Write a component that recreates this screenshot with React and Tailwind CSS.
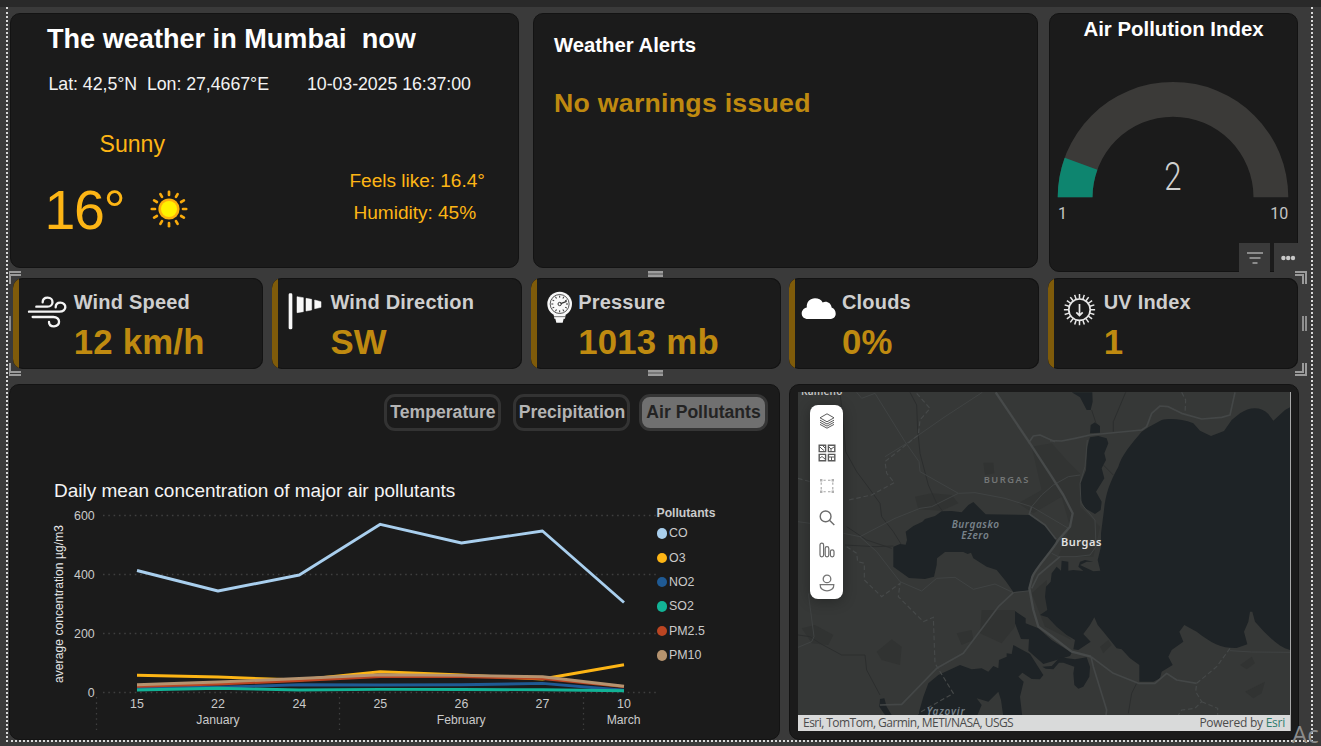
import React from "react";

const CARD = "bg-[#1b1b1b] border border-[#131313] rounded-[10px]";

function SunIcon() {
  const rays = Array.from({ length: 12 }, (_, i) => i * 30);
  return (
    <svg width="40" height="40" viewBox="-20 -20 40 40">
      {rays.map((a) => (
        <line key={a} x1="0" y1="-14" x2="0" y2="-17.2" stroke="#f9ab0c" strokeWidth="2.7" strokeLinecap="round" transform={`rotate(${a})`} />
      ))}
      <circle r="10.6" fill="#fdb10b" />
      <circle r="8" fill="#fff200" />
    </svg>
  );
}

function CurrentWeather() {
  return (
    <section className={`${CARD} relative h-[255px] w-[509px] pl-[36px] pt-[11px]`}>
      <h1 className="whitespace-pre text-[27.1px] font-bold leading-none text-white">{"The weather in Mumbai  now"}</h1>
      <div className="mt-[24px] flex whitespace-pre pl-[1.5px] text-[17.8px] leading-none text-[#f2f2f2]">
        <span className="w-[258.5px] tracking-[-0.05px]">{"Lat: 42,5°N  Lon: 27,4667°E"}</span>
        <span className="tracking-[-0.07px]">10-03-2025 16:37:00</span>
      </div>
      <div className="flex text-[#fdb515]">
        <div className="w-[302.5px] pt-[39px]">
          <div className="pl-[52.5px] text-[23.1px] leading-none">Sunny</div>
          <div className="-ml-[2.5px] mt-[27px] flex items-start">
            <span className="w-[104px] text-[55.5px] leading-none tracking-[-1.4px]">16°</span>
            <span className="pt-[6px]"><SunIcon /></span>
          </div>
        </div>
        <div className="whitespace-nowrap pt-[77px] text-[19.1px] leading-none tracking-[-0.04px]">
          <div>Feels like: 16.4°</div>
          <div className="mt-[13px] pl-[4px]">Humidity: 45%</div>
        </div>
      </div>
    </section>
  );
}

function Alerts() {
  return (
    <section className={`${CARD} h-[255px] w-[505px] pl-[20px] pt-[21px]`}>
      <h2 className="text-[20.3px] font-bold leading-none text-white">Weather Alerts</h2>
      <p className="mt-[35px] text-[26.7px] font-bold leading-none tracking-[0.26px] text-[#bf8a10]">No warnings issued</p>
    </section>
  );
}

function PollutionIndex() {
  return (
    <section className={`${CARD} relative h-[259px] w-[249px] pt-[5px]`}>
      <h2 className="text-center text-[20.4px] font-bold leading-none text-white">Air Pollution Index</h2>
      <svg className="mt-[42px] block" width="247" height="150" viewBox="1050 81 247 150">
        <path d="M1057.7 197.2 A115.3 115.3 0 0 1 1288.3 197.2 L1253.5 197.2 A80.5 80.5 0 0 0 1092.5 197.2 Z" fill="#3b3a38" />
        <path d="M1057.7 197.2 A115.3 115.3 0 0 1 1064.7 157.8 L1097.4 169.7 A80.5 80.5 0 0 0 1092.5 197.2 Z" fill="#0e856f" />
        <text x="0" y="0" transform="translate(1173 190) scale(0.82 1)" textAnchor="middle" fontFamily="Roboto, sans-serif" fontWeight="300" fontSize="38" fill="#d0d0d0">2</text>
        <text x="1058" y="218.5" fontFamily="Roboto, sans-serif" fontSize="16" fill="#c4c4c4">1</text>
        <text x="1288.2" y="218.5" textAnchor="end" fontFamily="Roboto, sans-serif" fontSize="16" fill="#c4c4c4">10</text>
      </svg>
      <div className="absolute -bottom-px -right-[5px] flex gap-[4px]">
        <div className="flex h-[29px] w-[31px] items-center justify-center bg-[#3a3a3a]">
          <svg width="16" height="14" viewBox="0 0 16 14" stroke="#a6a6a6" strokeWidth="1.7">
            <path d="M0 2H16M2.5 7H13.5M5.5 12H10.5" />
          </svg>
        </div>
        <div className="flex h-[29px] w-[28px] items-center justify-center bg-[#3a3a3a]">
          <svg width="16" height="6" viewBox="0 0 16 6" fill="#c8c8c8">
            <circle cx="3.4" cy="3" r="2.2" /><circle cx="8.2" cy="3" r="2.2" /><circle cx="13" cy="3" r="2.2" />
          </svg>
        </div>
      </div>
    </section>
  );
}

const ticks = (n) => Array.from({ length: n }, (_, i) => (i * 360) / n);

const windIcon = (
  <svg width="54" height="91" viewBox="57 48 162 273" fill="none" stroke="#f4f4f4" strokeWidth="7" strokeLinecap="round">
    <path d="M109 134H142C163 134 162 107 143 107C133 107 128 113 128 121" />
    <path d="M87 149H178C202 149 201 122 181 122C171 122 167 129 167 136" />
    <path d="M98 165H160C183 165 182 193 162 193C152 193 147 187 147 180" />
  </svg>
);
const sockIcon = (
  <svg width="52" height="91" viewBox="834 48 156 273" fill="#f8f8f8">
    <rect x="866" y="94" width="11" height="108" rx="4" />
    <path d="M891 104L910 107V149L891 152ZM918 109L935 112V144L918 147ZM944 114L963 119V136L944 140Z" stroke="#f8f8f8" strokeWidth="1.5" />
  </svg>
);
const pressureIcon = (
  <svg width="41" height="91" viewBox="411 48 123 273">
    <circle cx="479" cy="126" r="37" fill="#f8f8f8" />
    <circle cx="479" cy="126" r="28.5" fill="none" stroke="#333" strokeWidth="2.5" />
    {ticks(12).map((a) => (
      <path key={a} d="M479 101V107" stroke="#333" strokeWidth="3" transform={`rotate(${a} 479 126)`} />
    ))}
    <circle cx="479" cy="126" r="5" fill="none" stroke="#333" strokeWidth="3" />
    <path d="M482 125L500 118" stroke="#333" strokeWidth="3.5" />
    <path d="M461 158H497L495 170H491L488 182H469L466 170H463Z" fill="#f8f8f8" />
    <path d="M461 164H497" stroke="#333" strokeWidth="2" />
  </svg>
);
const cloudIcon = (
  <svg width="46" height="91" viewBox="795.5 278 46 91">
    <path fill="#fff" d="M808.5 319C804.5 319 802.2 316.5 802.2 313.5C802.2 310.5 804.5 308 807.3 307.5C806.8 302 810.5 298.3 815.5 298.3C819 298.3 821.7 299.8 823.2 302.4C827 300.6 831.8 303 832.1 307.6C835 308.7 836.2 311 836.2 313.7C836.2 317 833.5 319 830 319Z" />
  </svg>
);
const uvIcon = (
  <svg width="49" height="91" viewBox="1054.5 278 49 91" fill="none" stroke="#e8e8e8">
    <circle cx="1080" cy="309.7" r="10.7" strokeWidth="1.7" />
    {ticks(20).map((a) => (
      <path key={a} d="M1080 298.7V294.1" strokeWidth="1.5" transform={`rotate(${a} 1080 309.7)`} />
    ))}
    <path d="M1080 304V315M1076.8 312.3L1080 315.5L1083.2 312.3" strokeWidth="1.7" />
  </svg>
);

const METRICS = [
  { label: "Wind Speed", value: "12 km/h", icon: windIcon },
  { label: "Wind Direction", value: "SW", icon: sockIcon },
  { label: "Pressure", value: "1013 mb", icon: pressureIcon },
  { label: "Clouds", value: "0%", icon: cloudIcon },
  { label: "UV Index", value: "1", icon: uvIcon },
];

function Metric({ label, value, icon }) {
  return (
    <div className="flex h-[91px] w-[250px] overflow-hidden rounded-[10px] bg-[#1b1b1b] shadow-[inset_0_0_0_1px_#131313]">
      <div className="w-[6px] shrink-0 bg-[#7f5b0a]" />
      {icon}
      <div className="whitespace-nowrap pl-[0.7px] pt-[14px] font-bold leading-none">
        <div className="text-[20px] leading-none tracking-[0.2px] text-[#cfcfcf]">{label}</div>
        <div className="mt-[13px] text-[34.8px] leading-none tracking-[0.2px] text-[#bf8a10]">{value}</div>
      </div>
    </div>
  );
}

function SelectionFrame() {
  const c = "absolute h-[13px] w-[12px] border-[#9a9a9a]";
  const h = "absolute left-[639px] h-[6px] w-[15px] border-y-2 border-[#9c9c9c] bg-[#777]";
  return (
    <div className="pointer-events-none absolute -left-[4px] -top-[7px] h-[105px] w-[1298px]">
      <div className={`${c} left-0 top-0 border-l-2 border-t-[5px] border-double`} />
      <div className={`${c} right-0 top-0 border-r-[5px] border-t-[5px] border-double`} />
      <div className={`${c} bottom-0 left-0 border-b-[5px] border-l-2 border-double`} />
      <div className={`${c} bottom-0 right-0 border-b-[5px] border-r-[5px] border-double`} />
      <div className={`${h} top-0`} />
      <div className={`${h} bottom-0`} />
      <div className="absolute left-0 top-[45px] h-[15px] w-[2px] bg-[#8a8a8a]" />
      <div className="absolute right-0 top-[45px] h-[15px] w-[5px] border-x-2 border-[#8f8f8f]" />
    </div>
  );
}

const XS = [137, 218, 299.3, 380.3, 461.5, 542.5, 624];
const SERIES = [
  { name: "CO", color: "#a9cfee", ys: [570.5, 591, 575, 524.3, 543, 531, 602.5] },
  { name: "O3", color: "#fdb515", ys: [675.3, 677, 680, 671.8, 675, 679, 664.8] },
  { name: "NO2", color: "#1f5a94", ys: [688, 687.2, 684.8, 685, 684.8, 683.4, 690.3] },
  { name: "SO2", color: "#12b396", ys: [690, 688.3, 690, 689.4, 689.5, 689.8, 690.8] },
  { name: "PM2.5", color: "#bb4522", ys: [686.3, 684, 680.6, 676.6, 676.6, 678.6, 686.6] },
  { name: "PM10", color: "#b5936f", ys: [684.8, 682, 678.5, 674.8, 675.4, 676.8, 686.3] },
];

function Chart() {
  const labels = ["15", "22", "24", "25", "26", "27", "10"];
  return (
    <svg width="606" height="230" viewBox="50 503 606 230" fontSize="12.4" fill="#cacaca" className="shrink-0">
      <g stroke="#3f3f3f" strokeWidth="1.3" strokeDasharray="1.6 3.7">
        {[515.5, 574.5, 633.5, 692.5].map((y) => <line key={y} x1="103" x2="656" y1={y} y2={y} />)}
        {[96.5, 339.5, 583.5].map((x) => <line key={x} y1="697" y2="730" x1={x} x2={x} />)}
      </g>
      {[["600", 519.5], ["400", 578.5], ["200", 637.5], ["0", 696.7]].map(([t, y]) => (
        <text key={t} x="94.7" y={y} textAnchor="end">{t}</text>
      ))}
      <text transform="translate(62.8 604) rotate(-90)" textAnchor="middle" fontSize="12" textLength="158" fill="#e6e6e6">average concentration µg/m3</text>
      {labels.map((t, i) => <text key={t} x={XS[i]} y="708.4" textAnchor="middle">{t}</text>)}
      <text x="218" y="724.4" textAnchor="middle" fontSize="12.2">January</text>
      <text x="461.2" y="724.4" textAnchor="middle" fontSize="12.2">February</text>
      <text x="623.6" y="724.4" textAnchor="middle" fontSize="12.2">March</text>
      {SERIES.map((s) => (
        <polyline key={s.name} fill="none" stroke={s.color} strokeWidth="2.9" strokeLinejoin="round" points={XS.map((x, i) => `${x},${s.ys[i]}`).join(" ")} />
      ))}
    </svg>
  );
}

function Tab({ children, active, wide }) {
  return (
    <button
      className={`flex h-[37px] items-center justify-center whitespace-nowrap rounded-[11px] border-[3px] text-[17.6px] font-bold leading-none ${
        wide ? "w-[129px]" : "w-[117px] pl-px"
      } ${active ? "border-[#353535] bg-[#707070] text-[#232323]" : "border-[#333333] bg-[#1b1b1b] text-[#b4b4b4]"}`}
    >
      {children}
    </button>
  );
}

function PollutantsPanel() {
  return (
    <section className={`${CARD} h-[356px] w-[771px] pt-[9px]`}>
      <div className="flex justify-end pr-[11px]">
        <div className="mr-[12px]"><Tab>Temperature</Tab></div>
        <div className="mr-[9px]"><Tab>Precipitation</Tab></div>
        <Tab active wide>Air Pollutants</Tab>
      </div>
      <h2 className="mt-[50px] pl-[44px] text-[19px] leading-none text-[#f4f4f4]">Daily mean concentration of major air pollutants</h2>
      <div className="mt-[3px] flex pl-[40px]">
        <Chart />
        <div className="pl-[0.5px] pt-[4px] text-[12.4px] leading-none text-[#cacaca]">
          <div className="mb-[2px] text-[12.2px] font-bold">Pollutants</div>
          {SERIES.map((s) => (
            <div key={s.name} className="flex h-[24.4px] items-center gap-[2px]">
              <span className="h-[10.5px] w-[10.5px] rounded-full" style={{ backgroundColor: s.color }} />
              {s.name}
            </div>
          ))}
        </div>
      </div>
    </section>
  );
}

function MapDrawing() {
  return (
    <svg className="block" width="492" height="339" viewBox="39 36 1476 1017">
      <rect x="39" y="36" width="1476" height="1017" fill="#363837" />
      <g fill="#313332">
        <path d="M595 248L625 248L628 280L600 285ZM390 350L440 340L500 345L520 370L470 392L400 388ZM590 690L640 690L690 690L690 740L650 790L585 760ZM275 815L320 778L350 800L345 855L290 840ZM50 745L90 735L145 765L130 795L80 790ZM515 760L560 750L565 780L530 795Z" />
        <path d="M740 200L800 190L845 240L885 280L885 380L945 440L925 530L820 530L855 440L830 350L745 400L700 370L770 330Z" fill="#323433" />
        <path d="M1365 855L1400 830L1410 850L1385 868ZM1380 935L1440 905L1430 940L1405 955ZM945 800L970 780L980 795L955 820ZM740 640L785 600L790 700L860 780L780 740Z" />
      </g>
      <g fill="#1e2326">
        <path d="M325 500L345 492L362 494L366 480L362 455L385 438L412 425L420 417L450 408L470 394L500 393L530 397L550 375L565 366L602 403L735 405C770 425 800 450 813 478L812 490C795 520 760 560 742 585L730 632L685 636L662 603L635 570L605 560L565 535L558 518L548 522L535 516L480 516L456 535L455 555L447 590L420 597L372 594L325 560Z" />
        <path d="M1515 82L1500 90L1465 122L1450 102C1430 80 1395 78 1365 100L1340 120L1317 153L1278 168L1245 152L1225 130C1190 115 1150 115 1130 120L1090 142L1070 155C1040 190 1010 225 1000 260C975 305 962 340 957 390L948 460L948 500L938 540L946 572L925 574L885 555L905 545L925 545L900 540L885 545L880 560L895 573L865 570L850 572L850 545L830 542L828 572L815 560L800 580L797 605L783 620L780 650L787 690L765 705L788 712L815 740L845 765L870 780L865 808L880 810L917 785L895 762L915 735L928 712L938 735L955 755L995 805L1010 808L1035 835L1063 855L1063 905L1105 905L1125 895L1130 875L1163 855L1150 830L1160 810L1195 785L1183 755L1198 735L1235 755C1280 790 1310 805 1355 804L1387 793L1377 755L1390 725L1395 695L1402 695L1410 725C1450 770 1480 800 1515 810Z" />
        <path d="M915 172L940 168L965 175L970 190L958 220L963 240L950 265L958 295L933 335L950 365L947 390L930 402L900 385L885 355L887 310L903 270L907 200ZM917 135L930 127L945 138L945 158L915 160ZM860 37L885 52L905 90L917 90L923 65L922 37Z" />
        <path d="M690 693L722 715L722 730L760 745L800 780L860 818L855 828L775 852L730 812L732 778L708 777L690 730Z" />
        <path d="M685 795L735 822L775 885L765 898L740 897L712 878L700 890L716 905L705 950L712 1010L655 1010L648 960L640 935L610 965L575 955L590 975L575 1010L398 1010L415 950L430 910L460 885L525 855L560 868L590 865L610 875L625 858L640 865L642 840L665 830L665 820L680 822Z" />
        <path d="M772 860L800 858L825 832L870 838L905 832L915 860L913 890L895 920L880 926L868 915L865 880L868 860L835 848L822 848L805 868L782 866Z" />
        <path d="M285 957L298 955L305 980L320 1005L300 1005L283 980Z" />
      </g>
      <g fill="none" stroke="#2c2e2e" strokeWidth="3">
        <path d="M165 37L175 130L182 215L215 275L245 315L285 370L290 410L325 455L348 492M375 37L395 75L398 150L405 220L430 315L455 370L472 392M185 440L245 480L320 505M39 765L75 770L105 790L170 825L240 825L245 870L285 945M180 495L270 500L325 498M1022 37L985 125L985 155M920 90L933 130M955 255L985 285M1055 910L1040 940L1030 1000" />
      </g>
      <g fill="none" stroke="#404343" strokeWidth="3">
        <path d="M592 37L480 110L365 190L300 230M215 37L230 55L270 40L360 185L402 245L405 275L520 340L570 338L660 355L740 380L850 445M520 340L440 380L405 385L330 415L225 470L175 460M225 470L275 515L345 605L410 633L455 595L510 592L565 628L630 612L685 638L735 632M39 425L75 430M70 640L87 770L80 785L39 802M1335 812L1400 816L1515 817" />
        <path d="M740 380L770 345L805 315L850 290L885 285M907 180L900 260L885 310L888 370L930 420L933 500L915 525L870 530L820 530L800 520" />
      </g>
      <g fill="none" stroke="#444747" strokeWidth="5" strokeLinejoin="round">
        <path d="M685 638L640 680L535 820L455 865L350 973L285 975M740 380L733 402L780 435L813 478M795 182L830 183L870 175L915 165L1070 150L1085 140L1100 100L1125 78L1150 80L1190 100L1250 117L1310 112L1335 105L1350 37" />
        <path d="M730 190L745 168L765 165L810 185M740 625L760 585L825 530" />
        <path d="M918 830L925 860L965 990L957 1053M918 830L985 880L1060 910L1110 910L1145 880L1175 900L1235 910" />
      </g>
      <g fill="none" stroke="#474a4a" strokeWidth="7" strokeLinejoin="round">
        <path d="M632 37L735 190L800 290L835 345L863 400L855 440L820 480C800 515 755 560 742 590L733 625L745 690L760 740L795 765L860 815L918 830" />
      </g>
      <g fill="none" stroke="#464949" strokeWidth="3.5" strokeDasharray="14 8">
        <path d="M395 40L435 85L405 120L400 165L300 245L305 280L328 308L260 345L190 360M39 295L75 305M185 500L215 520L218 545L238 550L238 600L290 650L345 610L340 650L415 725L445 712L450 850L505 940L400 1000M1190 37L1202 60L1200 100M1335 805L1295 860L1235 910L1232 935L1250 965L1230 985L1190 990L1180 1005M1250 965L1298 985L1298 1005" />
      </g>
      <g fontFamily="'Noto Sans', 'Open Sans', sans-serif" fontWeight="600">
        <text x="48" y="44" fontSize="30" textLength="124" fill="#c4c4c4">Kameno</text>
        <text x="596" y="310" fontSize="28" textLength="134" fill="#737676">BURGAS</text>
        <g fontStyle="italic" fill="#78828a" fontSize="30">
          <text x="500" y="443" textLength="142">Burgasko</text>
          <text x="529" y="478" textLength="82">Ezero</text>
          <text x="425" y="1006" textLength="114">Yazovir</text>
        </g>
        <text x="828" y="499" fontSize="33" textLength="121" fill="#e2e2e2">Burgas</text>
      </g>
    </svg>
  );
}

const TOOL_ICONS = [
  <svg key="layers" width="18" height="18" viewBox="0 0 18 18" fill="none" stroke="#5c5c5c" strokeWidth="1">
    <path d="M9 1.8L16 5.8L9 9.8L2 5.8ZM2 8.2L9 12L16 8.2M2 10.3L9 14.1L16 10.3M2 12.4L9 16.2L16 12.4" />
  </svg>,
  <svg key="basemap" width="18" height="18" viewBox="0 0 18 18" fill="none" stroke="#5a5a5a" strokeWidth="1.4">
    <path d="M1.2 1.2H7.6V7.6H1.2ZM10.4 1.2H16.8V7.6H10.4ZM1.2 10.4H7.6V16.8H1.2ZM10.4 10.4H16.8V16.8H10.4Z" />
    <path d="M2 3L4 5L6 6.5M5 2L7 4M11 3L13 5L16 3M13 5V7M2 14L4 12.5L7 15M11 13H16M13.5 13V16" strokeWidth="1" />
  </svg>,
  <svg key="select" width="18" height="18" viewBox="0 0 18 18" fill="none" stroke="#a4a4a4" strokeWidth="1.1">
    <path d="M5.5 3.2H7.7M10 3.2H12.5M5.5 14.8H7.7M10 14.8H12.5M3.2 5.5V7.7M3.2 10V12.5M14.8 5.5V7.7M14.8 10V12.5" />
    <path d="M2 2H4.4V4.4H2ZM13.6 2H16V4.4H13.6ZM2 13.6H4.4V16H2ZM13.6 13.6H16V16H13.6Z" fill="#b0b0b0" stroke="none" />
  </svg>,
  <svg key="search" width="18" height="18" viewBox="0 0 18 18" fill="none" stroke="#6c6c6c" strokeWidth="1.4">
    <circle cx="7.6" cy="7.4" r="5.4" /><path d="M11.5 11.3L16.3 16" />
  </svg>,
  <svg key="infographics" width="18" height="18" viewBox="0 0 18 18" fill="none" stroke="#6c6c6c" strokeWidth="1.2">
    <rect x="2" y="2.2" width="3.6" height="13.6" rx="1.8" /><rect x="7.2" y="5.6" width="3.6" height="10.2" rx="1.8" /><rect x="12.4" y="8.8" width="3.6" height="7" rx="1.8" />
  </svg>,
  <svg key="user" width="18" height="18" viewBox="0 0 18 18" fill="none" stroke="#757575" strokeWidth="1.3">
    <circle cx="9" cy="4.9" r="3.8" /><path d="M2.2 10.6H15.8C16.2 15 12.5 16.8 9 16.8S1.8 15 2.2 10.6Z" />
  </svg>,
];

function MapPanel() {
  return (
    <section className={`${CARD} h-[356px] w-[510px] pl-[8px] pt-[7px]`}>
      <div className="relative h-[339px] w-[493px] overflow-hidden border-r border-[#a8a8a8]">
        <MapDrawing />
        <div className="absolute left-[12px] top-[13px] flex h-[194px] w-[33px] flex-col items-center justify-around rounded-[8px] bg-white shadow-[0_2px_14px_rgba(0,0,0,0.3)]">
          {TOOL_ICONS}
        </div>
        <div className="absolute inset-x-0 bottom-0 flex h-[16px] items-center justify-between whitespace-nowrap bg-[#d9dada] pl-[5px] pr-[5px] font-['Open_Sans',sans-serif] text-[12px] leading-none text-[#4c4c4c]">
          <span className="tracking-[-0.54px]">Esri, TomTom, Garmin, METI/NASA, USGS</span>
          <span className="tracking-[-0.25px]">Powered by <span className="text-[#2f7d6d]">Esri</span></span>
        </div>
      </div>
    </section>
  );
}

export default function App() {
  return (
    <div className="relative h-[746px] w-[1321px] overflow-hidden bg-[#3a3a3a] font-['Liberation_Sans',Arial,sans-serif]">
      <div className="h-[7px] bg-[#292929]" />
      <main className="ml-[6px] h-[735px] w-[1307px] border-x-2 border-b-2 border-dotted border-[#d8d8d8] pt-[6px]">
        <div className="flex items-start pl-[2px]">
          <CurrentWeather />
          <div className="ml-[14px] mr-[11px]"><Alerts /></div>
          <PollutionIndex />
        </div>
        <div className="relative ml-[5px] mt-[6px] flex w-[1285px] justify-between">
          {METRICS.map((m) => <Metric key={m.label} {...m} />)}
          <SelectionFrame />
        </div>
        <div className="mt-[15px] flex gap-[9px] pl-px">
          <PollutantsPanel />
          <MapPanel />
        </div>
      </main>
      <div className="absolute left-[1292px] top-[719px] font-['Open_Sans',sans-serif] text-[24px] leading-[30px] text-[#8c8c8c]">Ac</div>
    </div>
  );
}
